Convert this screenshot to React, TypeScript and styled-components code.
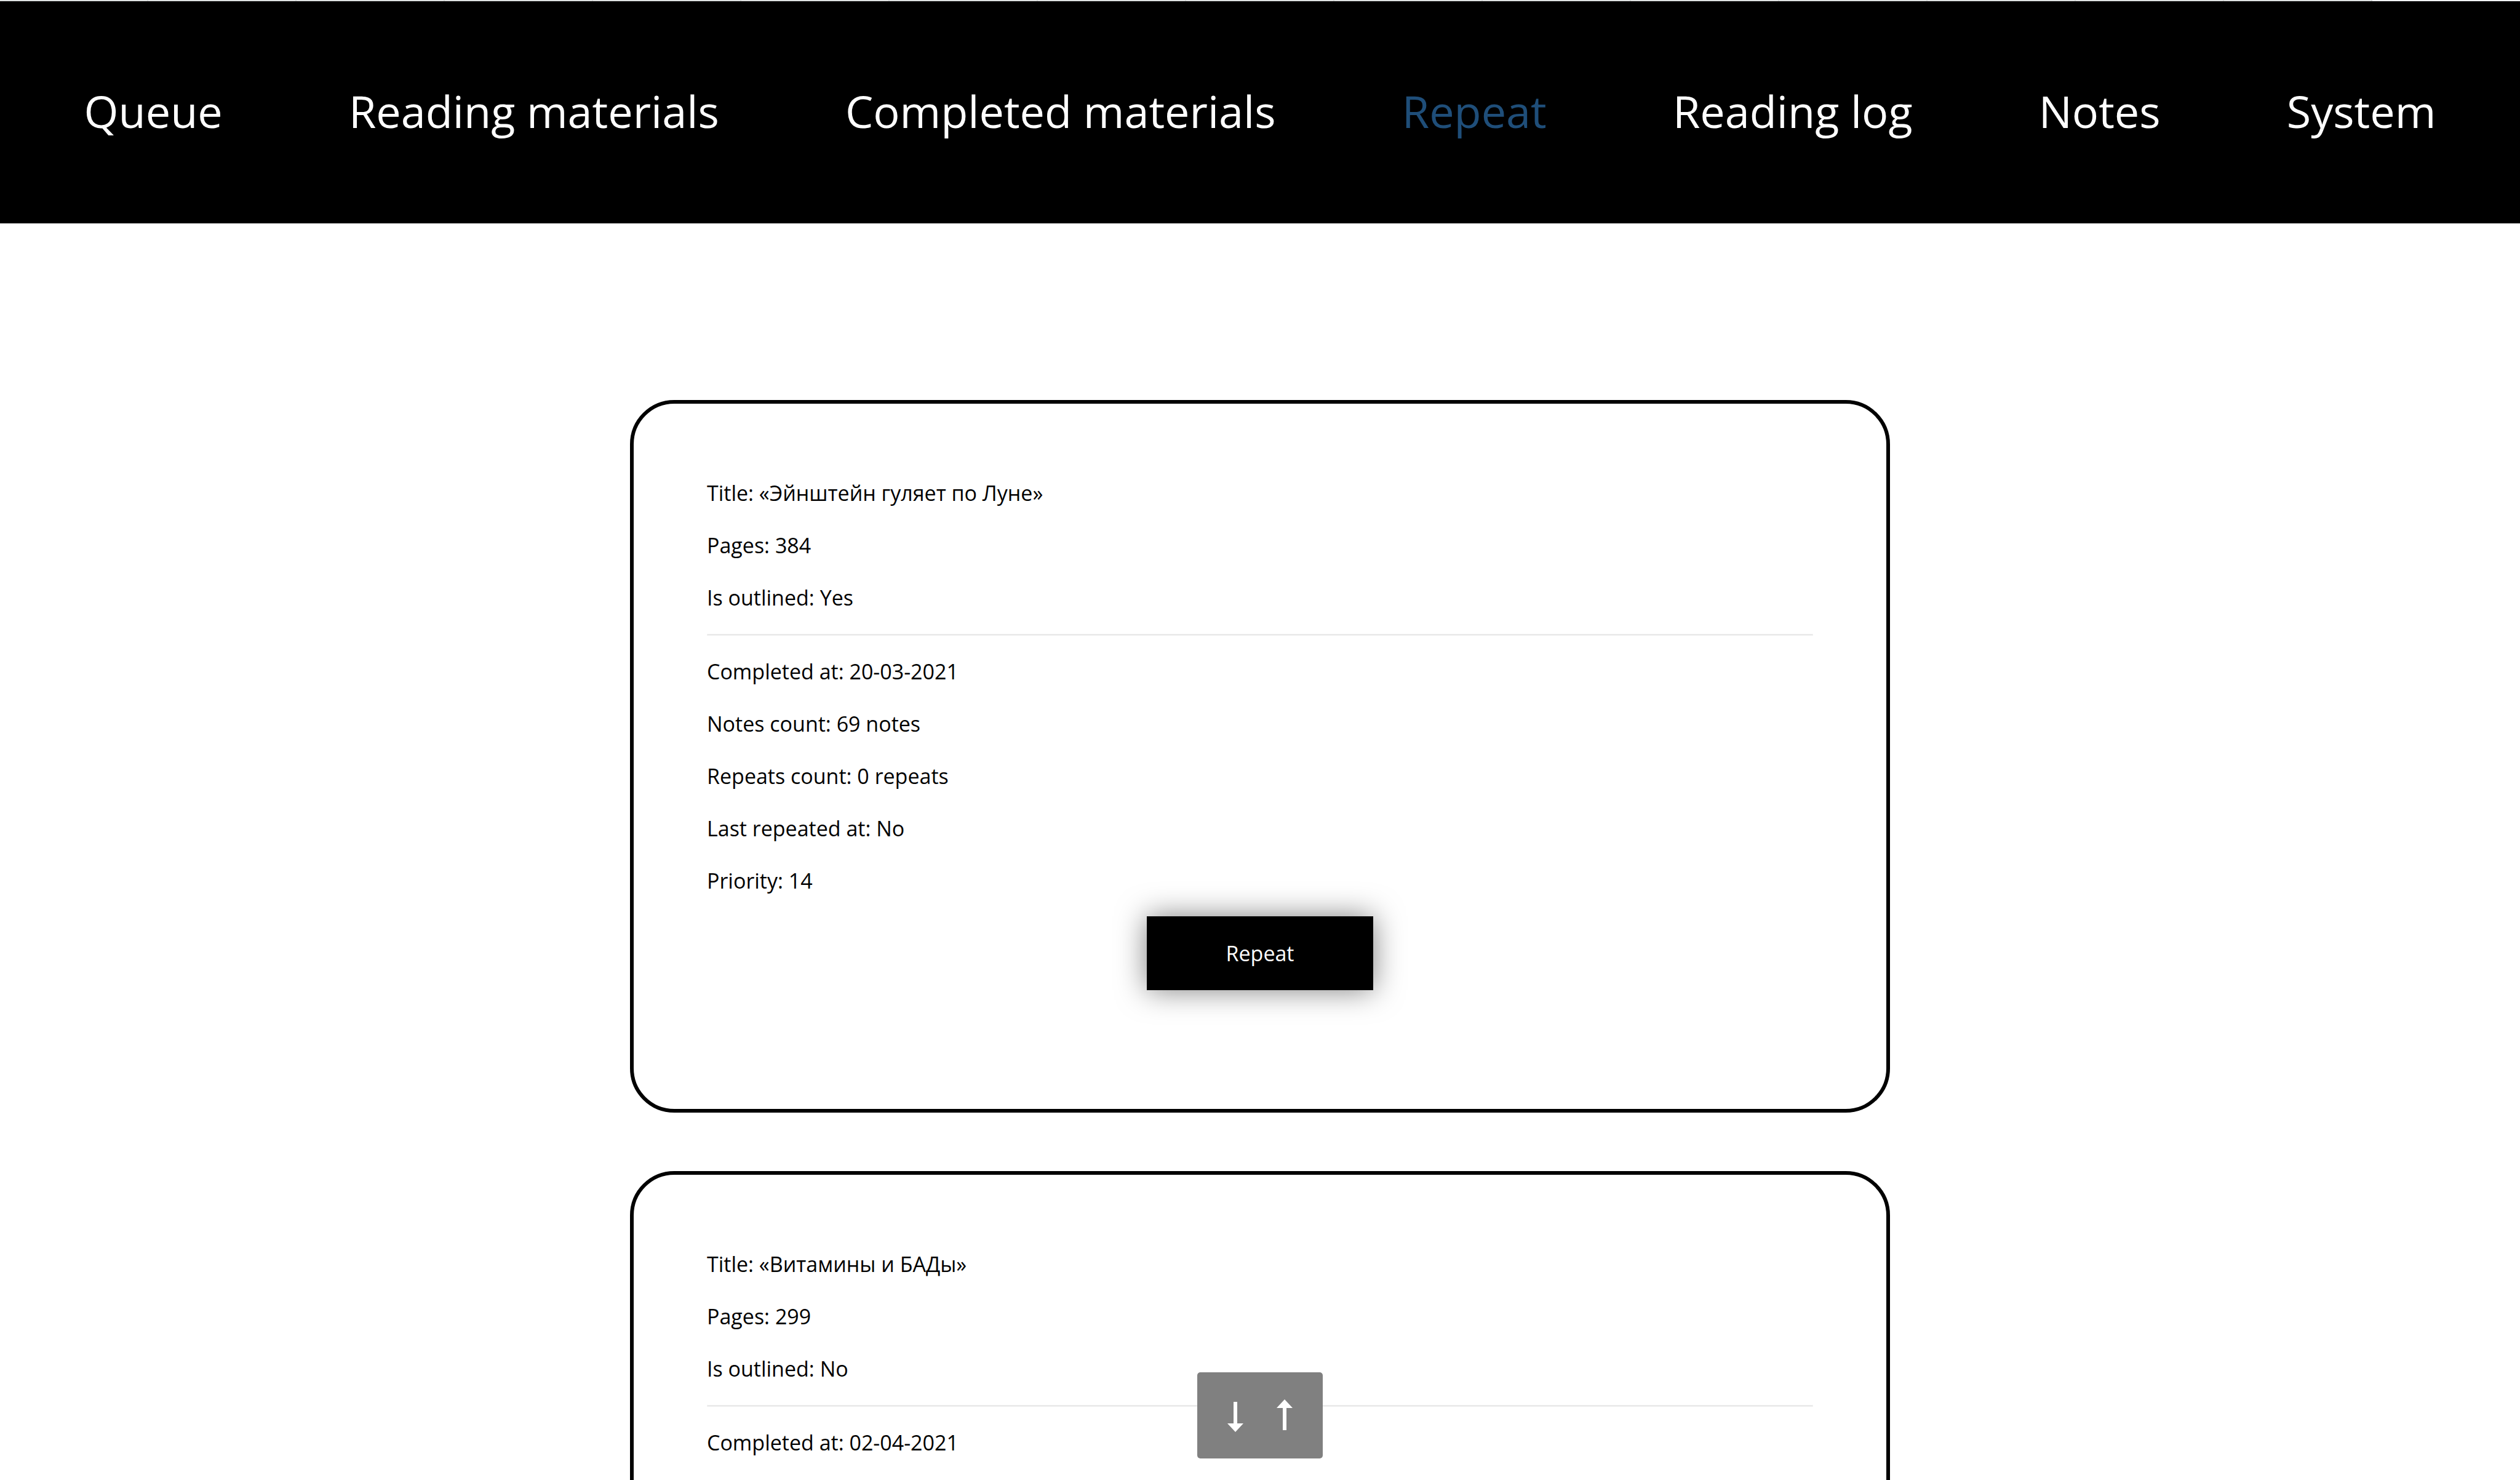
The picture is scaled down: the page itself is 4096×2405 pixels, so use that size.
import React from "react";
import styled, { createGlobalStyle } from "styled-components";

const GlobalStyle = createGlobalStyle`
  * { box-sizing: border-box; }
  html, body { margin: 0; height: 100%; overflow: hidden; }
  body {
    background: #fff;
    color: #000;
    font: 34px/48px "Open Sans", "Noto Sans", sans-serif;
  }
  #root { height: 100%; overflow: hidden; }
`;

const TabStrip = styled.div`
  display: flex;
  height: 2px;
  background: #f1f3f4;
`;

const Tab = styled.span`
  flex: 0 0 241px;
  border-right: 2px solid #d0d3d3;
  background: #dfe2e2;
`;

const Header = styled.header`
  background: #000;
`;

const Menu = styled.nav`
  display: flex;
  justify-content: space-around;
  align-items: center;
  padding: 128px 34px 132px;
`;

const MenuLink = styled.a<{ $active?: boolean }>`
  color: ${({ $active }) => ($active ? "#1f4e79" : "#fff")};
  font-size: 72px;
  line-height: 101px;
  text-decoration: none;
  white-space: nowrap;
`;

const Main = styled.main`
  display: flex;
  flex-direction: column;
  align-items: center;
  gap: 95px;
  padding-top: 287px;
`;

const Card = styled.article`
  display: flex;
  flex-direction: column;
  width: 50%;
  padding: 121px 119px 193px;
  border: 6px solid #000;
  border-radius: 72px;
`;

const Fields = styled.div`
  display: flex;
  flex-direction: column;
  gap: 37px;
`;

const Field = styled.p`
  margin: 0;
`;

const Divider = styled.hr`
  width: 100%;
  height: 3px;
  margin: 35px 0 34px;
  border: 1px solid #f1f1f1;
  background: #e3e3e3;
`;

const RepeatButton = styled.button`
  align-self: center;
  width: 368px;
  height: 120px;
  margin-top: 34px;
  border: 0;
  background: #000;
  color: #fff;
  font: inherit;
  box-shadow: 0 0 48px rgba(0, 0, 0, 0.5);
`;

const Scroller = styled.div`
  position: fixed;
  bottom: 35px;
  left: 50%;
  display: flex;
  justify-content: center;
  align-items: center;
  gap: 28px;
  width: 204px;
  height: 140px;
  border-radius: 5px;
  background: #808080;
  transform: translateX(-50%);
`;

const ScrollButton = styled.button`
  display: flex;
  padding: 0;
  border: 0;
  background: none;
  color: #fff;
`;

const tabs = Array.from({ length: 16 }, (_, i) => i);

const menu = [
  "Queue",
  "Reading materials",
  "Completed materials",
  "Repeat",
  "Reading log",
  "Notes",
  "System",
];

interface Stats {
  notes: number;
  repeats: number;
  lastRepeated: string;
  priority: number;
}

interface Material {
  title: string;
  pages: number;
  outlined: string;
  completed: string;
  stats?: Stats;
}

const materials: Material[] = [
  {
    title: "Эйнштейн гуляет по Луне",
    pages: 384,
    outlined: "Yes",
    completed: "20-03-2021",
    stats: { notes: 69, repeats: 0, lastRepeated: "No", priority: 14 },
  },
  {
    title: "Витамины и БАДы",
    pages: 299,
    outlined: "No",
    completed: "02-04-2021",
  },
];

function MaterialCard({ item }: { item: Material }) {
  const { stats } = item;
  return (
    <Card>
      <Fields>
        <Field>Title: «{item.title}»</Field>
        <Field>Pages: {item.pages}</Field>
        <Field>Is outlined: {item.outlined}</Field>
      </Fields>
      <Divider />
      <Fields>
        <Field>Completed at: {item.completed}</Field>
        {stats && (
          <>
            <Field>Notes count: {stats.notes} notes</Field>
            <Field>Repeats count: {stats.repeats} repeats</Field>
            <Field>Last repeated at: {stats.lastRepeated}</Field>
            <Field>Priority: {stats.priority}</Field>
          </>
        )}
      </Fields>
      {stats && <RepeatButton type="button">Repeat</RepeatButton>}
    </Card>
  );
}

export default function App() {
  return (
    <>
      <GlobalStyle />
      <TabStrip>
        {tabs.map((tab) => (
          <Tab key={tab} />
        ))}
      </TabStrip>
      <Header>
        <Menu>
          {menu.map((name) => (
            <MenuLink key={name} href="#" $active={name === "Repeat"}>
              {name}
            </MenuLink>
          ))}
        </Menu>
      </Header>
      <Main>
        {materials.map((item) => (
          <MaterialCard key={item.title} item={item} />
        ))}
      </Main>
      <Scroller>
        <ScrollButton type="button" aria-label="Scroll to the bottom">
          <svg width="52" height="56" viewBox="0 0 52 56" fill="currentColor">
            <path d="M23 6h6v35h10L26 55 13 41h10z" />
          </svg>
        </ScrollButton>
        <ScrollButton type="button" aria-label="Scroll to the top">
          <svg width="52" height="56" viewBox="0 0 52 56" fill="currentColor">
            <path d="M23 52h6V16h10L26 2 13 16h10z" />
          </svg>
        </ScrollButton>
      </Scroller>
    </>
  );
}
